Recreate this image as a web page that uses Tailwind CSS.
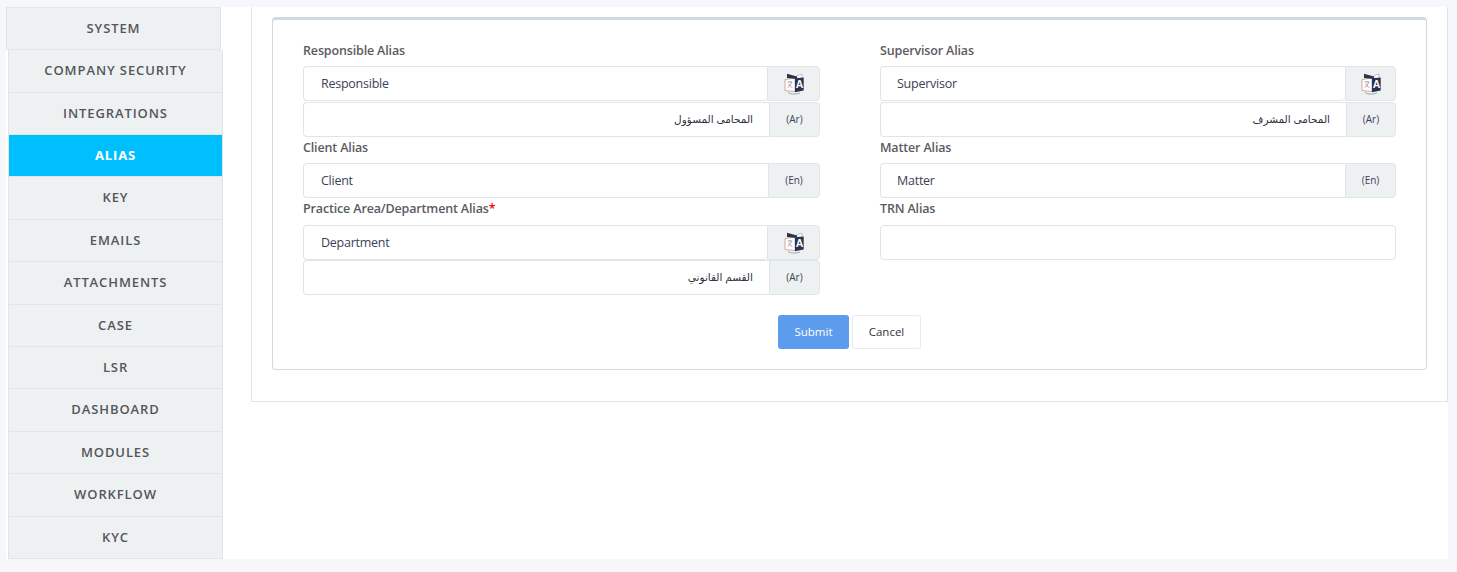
<!DOCTYPE html>
<html lang="en">
<head>
    <meta charset="UTF-8">
    <title>Alias</title>
    <script src="https://cdn.jsdelivr.net/npm/@tailwindcss/browser@4"></script>
</head>
<body class="bg-[#f5f7fa] font-['Open_Sans','Noto_Sans','DejaVu_Sans',sans-serif] text-[12.5px] tracking-[-0.25px] text-[#3b4256] h-[572px] overflow-hidden">
    <svg class="hidden">
        <symbol id="translate" viewBox="0 0 20 22">
            <path d="M1 6.5 L11 5 V18.5 L1 17.5 Z" fill="#fff" stroke="#c59a86" stroke-width="0.8"/>
            <path d="M13 4.5 V2.6 L18 1 V5" fill="#fff" stroke="#a3a9b3" stroke-width="0.7"/>
            <path d="M3 0.8 L13 3.6 V6 L3 5 Z" fill="#2b3350"/>
            <path d="M11 5.2 L19.7 4.6 V17.6 L11 19.2 Z" fill="#2b3350"/>
            <text x="15.4" y="15.4" text-anchor="middle" font-size="10.5" font-weight="700" fill="#fff" font-family="Liberation Sans, sans-serif">A</text>
            <path d="M3.6 9 H8.4 M6 8 V9 M7.6 9 C7 11.5 5.6 13.4 3.6 14.6 M4.8 10.8 C5.4 12.4 6.6 13.8 8.4 14.6" fill="none" stroke="#80848f" stroke-width="0.7"/>
            <path d="M4 19.5 C7 21.6 12 21.6 16 20" fill="none" stroke="#8d93a0" stroke-width="0.8"/>
        </symbol>
    </svg>

    <div class="mt-[7px] ml-[6px] w-[1442px] h-[552px] bg-white flex">
        <!-- side menu -->
        <nav class="w-[217px] shrink-0 font-semibold text-[13px] tracking-[0.9px] text-[#55565b] text-center">
            <a class="block w-[215px] h-[43.3px] leading-[41px] bg-[#edf1f2] border border-[#dfe6e8]">SYSTEM</a>
            <div class="ml-[2px] w-[215px] border-x border-[#dfe6e8] bg-[#edf1f2]">
                <a class="block h-[42.4px] leading-[41.8px] border-b border-[#dfe6e8]">COMPANY SECURITY</a>
                <a class="block h-[42.4px] leading-[41.8px] border-b border-[#dfe6e8]">INTEGRATIONS</a>
                <a class="block h-[42.4px] leading-[41.8px] border-b border-[#dfe6e8] bg-[#00bfff] text-white font-bold">ALIAS</a>
                <a class="block h-[42.4px] leading-[41.8px] border-b border-[#dfe6e8]">KEY</a>
                <a class="block h-[42.4px] leading-[41.8px] border-b border-[#dfe6e8]">EMAILS</a>
                <a class="block h-[42.4px] leading-[41.8px] border-b border-[#dfe6e8]">ATTACHMENTS</a>
                <a class="block h-[42.4px] leading-[41.8px] border-b border-[#dfe6e8]">CASE</a>
                <a class="block h-[42.4px] leading-[41.8px] border-b border-[#dfe6e8]">LSR</a>
                <a class="block h-[42.4px] leading-[41.8px] border-b border-[#dfe6e8]">DASHBOARD</a>
                <a class="block h-[42.4px] leading-[41.8px] border-b border-[#dfe6e8]">MODULES</a>
                <a class="block h-[42.4px] leading-[41.8px] border-b border-[#dfe6e8]">WORKFLOW</a>
                <a class="block h-[42.4px] leading-[41.8px] border-b border-[#dfe6e8]">KYC</a>
            </div>
        </nav>

        <!-- content panel -->
        <main class="ml-[28px] w-[1197px] h-[395px] border-l border-b border-r border-[#dfe6e8] pl-[20px] pr-[20px] pt-[10px]">
            <form class="h-[353px] border border-[#cfdbe2] border-t-[3px] rounded-[4px] pt-[20px] px-[30px]">
                <div class="flex justify-between">
                    <div class="w-[517px]">
                        <label class="block h-[26px] leading-[22px] font-semibold tracking-[-0.15px] text-[#5b5b5f]">Responsible Alias</label>
                        <div class="flex h-[35px]">
                            <div class="flex-1 flex items-center pl-[17px] pt-[2px] border border-[#dfe6e8] border-r-0 rounded-l-[4px] rounded-br-[4px]">Responsible</div>
                            <div class="w-[53px] flex items-center justify-center bg-[#edf1f2] border border-[#dfe6e8] rounded-r-[4px]"><svg class="w-[20px] h-[22px]"><use href="#translate"/></svg></div>
                        </div>
                        <div class="flex h-[35px] mt-[1px]">
                            <div dir="rtl" class="flex-1 flex items-center pr-[16px] border border-[#dfe6e8] border-r-0 rounded-l-[4px] text-[10.5px] tracking-normal text-[#2f3240]">المحامى المسؤول</div>
                            <div class="w-[51px] flex items-center justify-center bg-[#edf1f2] border border-[#dfe6e8] rounded-r-[4px] text-[10px] tracking-normal">(Ar)</div>
                        </div>
                        <label class="block h-[26px] leading-[22px] font-semibold tracking-[-0.15px] text-[#5b5b5f]">Client Alias</label>
                        <div class="flex h-[35px]">
                            <div class="flex-1 flex items-center pl-[17px] pt-[2px] border border-[#dfe6e8] border-r-0 rounded-l-[4px]">Client</div>
                            <div class="w-[52px] flex items-center justify-center bg-[#edf1f2] border border-[#dfe6e8] rounded-r-[4px] text-[10px] tracking-normal">(En)</div>
                        </div>
                        <label class="block h-[27px] leading-[21px] font-semibold tracking-[-0.15px] text-[#5b5b5f]">Practice Area/Department Alias<span class="text-[#ff0000]">*</span></label>
                        <div class="flex h-[35px]">
                            <div class="flex-1 flex items-center pl-[17px] pt-[2px] border border-[#dfe6e8] border-r-0 rounded-l-[4px] rounded-br-[4px]">Department</div>
                            <div class="w-[53px] flex items-center justify-center bg-[#edf1f2] border border-[#dfe6e8] rounded-r-[4px]"><svg class="w-[20px] h-[22px]"><use href="#translate"/></svg></div>
                        </div>
                        <div class="flex h-[35px]">
                            <div dir="rtl" class="flex-1 flex items-center pr-[16px] border border-[#dfe6e8] border-r-0 rounded-l-[4px] text-[10.5px] tracking-normal text-[#2f3240]">القسم القانوني</div>
                            <div class="w-[51px] flex items-center justify-center bg-[#edf1f2] border border-[#dfe6e8] rounded-r-[4px] text-[10px] tracking-normal">(Ar)</div>
                        </div>
                    </div>
                    <div class="w-[516px]">
                        <label class="block h-[26px] leading-[22px] font-semibold tracking-[-0.15px] text-[#5b5b5f]">Supervisor Alias</label>
                        <div class="flex h-[35px]">
                            <div class="flex-1 flex items-center pl-[16px] pt-[2px] border border-[#dfe6e8] border-r-0 rounded-l-[4px] rounded-br-[4px]">Supervisor</div>
                            <div class="w-[51px] flex items-center justify-center bg-[#edf1f2] border border-[#dfe6e8] rounded-r-[4px]"><svg class="w-[20px] h-[22px]"><use href="#translate"/></svg></div>
                        </div>
                        <div class="flex h-[35px] mt-[1px]">
                            <div dir="rtl" class="flex-1 flex items-center pr-[16px] border border-[#dfe6e8] border-r-0 rounded-l-[4px] text-[10.5px] tracking-normal text-[#2f3240]">المحامى المشرف</div>
                            <div class="w-[50px] flex items-center justify-center bg-[#edf1f2] border border-[#dfe6e8] rounded-r-[4px] text-[10px] tracking-normal">(Ar)</div>
                        </div>
                        <label class="block h-[26px] leading-[22px] font-semibold tracking-[-0.15px] text-[#5b5b5f]">Matter Alias</label>
                        <div class="flex h-[35px]">
                            <div class="flex-1 flex items-center pl-[16px] pt-[2px] border border-[#dfe6e8] border-r-0 rounded-l-[4px]">Matter</div>
                            <div class="w-[51px] flex items-center justify-center bg-[#edf1f2] border border-[#dfe6e8] rounded-r-[4px] text-[10px] tracking-normal">(En)</div>
                        </div>
                        <label class="block h-[27px] leading-[21px] font-semibold tracking-[-0.15px] text-[#5b5b5f]">TRN Alias</label>
                        <div class="h-[35px] border border-[#dfe6e8] rounded-[4px]"></div>
                    </div>
                </div>
                <div class="flex justify-center gap-[3px] mt-[20px] text-[11.5px] tracking-normal">
                    <button type="button" class="w-[71px] h-[34px] bg-[#5d9cec] text-white rounded-[3px]">Submit</button>
                    <button type="button" class="w-[69px] h-[34px] bg-white border border-[#e7eaee] rounded-[3px] text-[#2f3240]">Cancel</button>
                </div>
            </form>
        </main>
    </div>
</body>
</html>
